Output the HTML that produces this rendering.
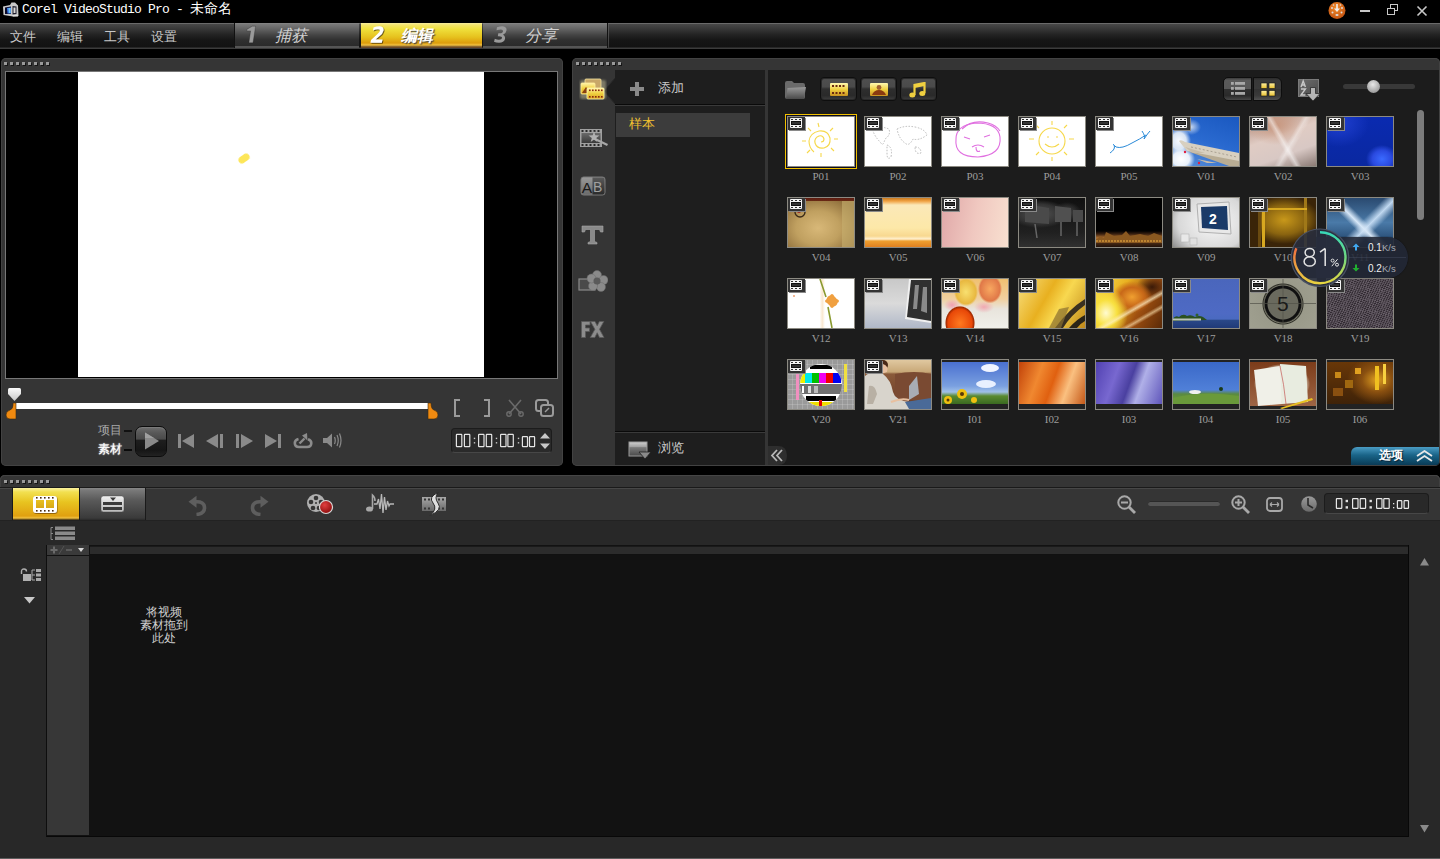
<!DOCTYPE html>
<html><head><meta charset="utf-8">
<style>
*{margin:0;padding:0;box-sizing:border-box}
html,body{width:1440px;height:859px;overflow:hidden;background:#000;font-family:"Liberation Sans",sans-serif}
.a{position:absolute}
/* title */
#title{left:0;top:0;width:1440px;height:23px;background:#000}
#ttxt{left:22px;top:2px;font-family:"Liberation Mono",monospace;font-size:13px;letter-spacing:-0.8px;color:#fff;white-space:nowrap;line-height:14px}
/* menubar */
#menu{left:0;top:23px;width:1440px;height:26px;background:linear-gradient(#6a6a6a 0,#6a6a6a 1px,#484848 1px,#333 7px,#222 12px,#161616 17px,#121212 24px,#3c3c3c 25px,#3c3c3c 26px)}
.mi{top:29px;font-size:13px;color:#c8c8c8;line-height:16px;white-space:nowrap}
.tab{top:23px;height:25px;background:linear-gradient(#8a8a8a 0,#7a7a7a 1px,#5e5e5e 7px,#444 12px,#303030 17px,#2a2a2a 23px,#555 23px,#555 25px)}
.tnum{font-style:italic;font-weight:bold;font-size:23px;line-height:22px;color:#8a8a8a}
.tlab{font-style:italic;font-size:16px;line-height:17px;color:#d0d0d0}
/* panels */
.panel{background:#353535;border-radius:5px;box-shadow:inset 0 0 0 1px #424242}
.dots{height:4px;background:linear-gradient(90deg,#9a9a9a 0 3px,transparent 3px) 0 0/6px 3px repeat-x,linear-gradient(90deg,#161616 0 3px,transparent 3px) 1px 1px/6px 3px repeat-x}
.thumb{width:68px;height:51px;border:1px solid #8c8a82;overflow:hidden}
.lbl{width:68px;text-align:center;font-family:"Liberation Serif",serif;font-size:11px;color:#9c9c9c;line-height:12px;letter-spacing:-0.1px}
.fi{position:absolute;left:0;top:0;width:17px;height:13px;background:#333;box-shadow:1px 1px 0 #8a8a8a}
.fi i{position:absolute;left:2px;top:1px;width:12px;height:10px;border-radius:1px;background:repeating-linear-gradient(90deg,transparent 0 1px,#333 1px 3px,transparent 3px 4px) 0 1px/12px 1px no-repeat,repeating-linear-gradient(90deg,transparent 0 1px,#333 1px 3px,transparent 3px 4px) 0 8px/12px 1px no-repeat,#f4f4f4}
.fi b{position:absolute;left:3px;top:4px;width:10px;height:4px;background:#333;border:1px solid #111}
</style></head><body>
<!-- TITLE BAR -->
<div id="title" class="a"></div>
<div id="ttxt" class="a">Corel VideoStudio Pro - <span style="font-size:14px;letter-spacing:0">未命名</span></div>

<!-- window controls -->
<svg class="a" style="left:2px;top:1px" width="18" height="17" viewBox="0 0 18 17"><path d="M1 5.5 L8 4 L9.5 1.5 L13 1.5 L16 4.5 L16.5 15 L11 15.5 L1.5 14Z" fill="#c8c8c8"/><path d="M3 6.5 L9 5.5 L9 13 L3 13Z" fill="#0a0a2a"/><path d="M5 7 L9 6.5 L9 12.5 L5.5 12.5Z" fill="#3a7ae8"/><path d="M6.5 7 L8.5 7 L8.5 12 L7 12Z" fill="#70c8f0"/><path d="M10.5 5 L14.5 5.5 L14.5 13 L10.5 13.5Z" fill="#202030"/><path d="M11.5 6.5 L13.5 6.5 L13.5 12 L11.5 12Z" fill="#d8d8d8"/><path d="M10 14 L16 14 L16 15.5 L11 15.5Z" fill="#e0e0e0"/></svg>
<svg class="a" style="left:1328px;top:1px" width="18" height="18" viewBox="0 0 18 18">
<defs><radialGradient id="og" cx="0.45" cy="0.35" r="0.7"><stop offset="0" stop-color="#f08a2a"/><stop offset="1" stop-color="#c05010"/></radialGradient></defs>
<circle cx="9" cy="9.5" r="8.5" fill="url(#og)"/>
<rect x="8.2" y="3" width="1.6" height="6" fill="#eee"/><path d="M6 7.5 L9 11 L12 7.5Z" fill="#eee"/>
<circle cx="4" cy="7" r="1" fill="#ddd"/><circle cx="14" cy="7" r="1" fill="#ddd"/><circle cx="4.5" cy="11.5" r="1" fill="#ddd"/><circle cx="13.5" cy="11.5" r="1" fill="#ddd"/><ellipse cx="9" cy="14" rx="1.6" ry="1.1" fill="#ddd"/><circle cx="5.5" cy="4" r="0.8" fill="#ddd"/><circle cx="12.5" cy="4" r="0.8" fill="#ddd"/>
</svg>
<div class="a" style="left:1360px;top:10px;width:10px;height:2px;background:#c8c8c8"></div>
<svg class="a" style="left:1387px;top:4px" width="12" height="12" viewBox="0 0 12 12"><rect x="3.5" y="0.5" width="7" height="6" fill="none" stroke="#c8c8c8"/><rect x="0.5" y="4.5" width="7" height="6" fill="#000" stroke="#c8c8c8"/></svg>
<svg class="a" style="left:1416px;top:5px" width="12" height="12" viewBox="0 0 12 12"><path d="M1.5 1.5 L10.5 10.5 M10.5 1.5 L1.5 10.5" stroke="#c8c8c8" stroke-width="1.6"/></svg>
<!-- MENU BAR -->
<div id="menu" class="a"></div>
<div class="a mi" style="left:10px">文件</div>
<div class="a mi" style="left:57px">编辑</div>
<div class="a mi" style="left:104px">工具</div>
<div class="a mi" style="left:151px">设置</div>
<div class="a" style="left:234px;top:23px;width:1px;height:25px;background:#111"></div>
<div class="a tab" style="left:235px;width:124px"></div>
<svg class="a" style="left:0;top:0" width="520" height="48" viewBox="0 0 520 48"><path d="M255.6 26.2 L252.3 26.2 L246.8 29.4 L246.8 30.9 L250.6 30.9 L248.9 42.8 L253 42.8Z" fill="#9a9a9a" stroke="#1e1e1e" stroke-width="0.3"/></svg>
<div class="a tlab" style="left:275px;top:27px">捕获</div>
<div class="a" style="left:361px;top:23px;width:121px;height:25px;background:linear-gradient(#f6eca0 0,#f3e46a 2px,#efe03c 6px,#e6c21e 14px,#dc9c0c 20px,#f0c040 22px,#6a4a2a 24px)"></div>
<svg class="a" style="left:0;top:0" width="400" height="48" viewBox="0 0 400 48"><defs><filter id="ds"><feDropShadow dx="0.8" dy="0.8" stdDeviation="0.5" flood-color="#3a2a00" flood-opacity="0.9"/></filter></defs><path d="M373.5 27.5 Q377 26 380 26.2 Q384 26.8 383.5 30.5 Q383 33.5 379 36.5 L375.5 39.5 L382.5 39.5 L381.8 42.7 L370.4 42.7 L371 40 L377.5 34 Q380 31.5 380 30.5 Q380 29.3 378 29.3 Q375.5 29.3 373 30.5Z" fill="#fff" filter="url(#ds)"/></svg>
<div class="a tlab" style="left:401px;top:27px;color:#fff;font-weight:bold;text-shadow:1px 1px 1px #444">编辑</div>
<div class="a tab" style="left:483px;width:124px"></div>

<svg class="a" style="left:0;top:0" width="520" height="48" viewBox="0 0 520 48"><path d="M497 27.2 Q501 26 504 26.5 Q507 27.5 506.5 30.5 Q506 33.5 503 34.8 Q505.5 36 505 39 Q504 42.8 499 42.8 Q496 42.8 494 41.8 L494.8 38.8 Q497 39.8 499 39.8 Q501.8 39.8 502 38 Q502.2 36.2 499 36.2 L497.8 36.2 L498.3 33.3 L499.5 33.3 Q503 33.3 503 31 Q503 29.5 501 29.5 Q499 29.5 496.5 30.2Z" fill="#9a9a9a"/></svg>
<div class="a tlab" style="left:525px;top:27px">分享</div>
<div class="a" style="left:607px;top:23px;width:1px;height:25px;background:#111"></div><div class="a" style="left:608px;top:24px;width:1px;height:24px;background:linear-gradient(#5a5a5a,#3a3a3a)"></div>

<!-- PREVIEW PANEL -->
<div class="a panel" style="left:1px;top:58px;width:562px;height:408px"></div>
<div class="a dots" style="left:4px;top:62px;width:46px"></div>
<div class="a" style="left:5px;top:71px;width:553px;height:308px;border:1px solid #777;background:#000"></div>
<div class="a" style="left:78px;top:72px;width:406px;height:305px;background:#fff"></div>

<!-- preview controls -->
<div class="a" style="left:238px;top:155px;width:12px;height:7px;border-radius:4px;background:#fde658;transform:rotate(-35deg);filter:blur(0.4px)"></div>
<div class="a" style="left:14px;top:403px;width:417px;height:6px;background:#fff"></div>
<svg class="a" style="left:5px;top:402px" width="12" height="18" viewBox="0 0 12 18"><path d="M8 1 L11 1 L11 17 L5 17 Q1 17 1 13 Q1 9 5 8 Q8 7 8 3Z" fill="#f08a10" stroke="#3a2a10" stroke-width="0.6"/></svg>
<svg class="a" style="left:427px;top:402px" width="12" height="18" viewBox="0 0 12 18"><path d="M1 1 L4 1 Q4 7 7 8 Q11 9 11 13 Q11 17 7 17 L1 17Z" fill="#f08a10" stroke="#3a2a10" stroke-width="0.6"/></svg>
<svg class="a" style="left:7px;top:387px" width="15" height="15" viewBox="0 0 15 15"><defs><linearGradient id="kg" x1="0" y1="0" x2="0" y2="1"><stop offset="0" stop-color="#fafafa"/><stop offset="1" stop-color="#c8c8c8"/></linearGradient></defs><path d="M2.5 1 L12.5 1 Q14 1 14 2.5 L14 7 L7.5 14 L1 7 L1 2.5 Q1 1 2.5 1Z" fill="url(#kg)"/></svg>
<div class="a" style="left:98px;top:424px;font-size:12px;color:#a8a8a8;line-height:13px">项目</div>
<div class="a" style="left:98px;top:443px;font-size:12px;color:#fff;line-height:13px;text-shadow:0 0 2px #aaa,0 0 1px #fff">素材</div>
<div class="a" style="left:124px;top:430px;width:8px;height:2px;background:#111"></div>
<div class="a" style="left:124px;top:449px;width:8px;height:2px;background:#0a0a0a"></div>
<div class="a" style="left:135px;top:426px;width:32px;height:31px;border-radius:7px;background:linear-gradient(#6e6e6e 0,#585858 20%,#4a4a4a 42%,#1e1e1e 45%,#161616 80%,#222 100%);border:1px solid #0c0c0c;box-shadow:inset 0 1px 0 #7a7a7a"></div>
<svg class="a" style="left:143px;top:431px" width="18" height="20" viewBox="0 0 18 20"><path d="M2 1.5 L16 10 L2 18.5Z" fill="#8a8a8a"/><path d="M2 1.5 L11 7 L2 7Z" fill="#a0a0a0"/></svg>
<svg class="a" style="left:177px;top:433px" width="120" height="16" viewBox="0 0 120 16" fill="#8a8a8a">
<rect x="1" y="1" width="3" height="14"/><path d="M5 8 L17 1 L17 15Z"/>
<path d="M29 8 L41 1 L41 15Z"/><rect x="43" y="1" width="3" height="14"/>
<rect x="59" y="1" width="3" height="14"/><path d="M64 1 L76 8 L64 15Z"/>
<path d="M88 1 L100 8 L88 15Z"/><rect x="101" y="1" width="3" height="14"/>
</svg>
<svg class="a" style="left:293px;top:432px" width="20" height="17" viewBox="0 0 20 17"><path d="M5.5 7 Q1.8 8 1.8 11 Q1.8 15 6 15 L14 15 Q18.3 15 18.3 11 Q18.3 8.2 15 7.2" fill="none" stroke="#8c8c8c" stroke-width="2.6"/><path d="M6.5 11.5 L11.5 6.5" stroke="#8c8c8c" stroke-width="2.4"/><path d="M9 3.5 L14 1 L14.5 8.5Z" fill="#8c8c8c"/></svg>
<svg class="a" style="left:322px;top:432px" width="20" height="17" viewBox="0 0 20 17"><path d="M1 6 L5 6 L10 1.5 L10 15.5 L5 11 L1 11Z" fill="#8a8a8a"/><path d="M12.5 5 Q14 8.5 12.5 12 M15 3 Q17.5 8.5 15 14 M17.5 1.5 Q20.5 8.5 17.5 15.5" fill="none" stroke="#8a8a8a" stroke-width="1.2"/></svg>
<svg class="a" style="left:452px;top:398px" width="110" height="20" viewBox="0 0 110 20" fill="none" stroke="#9a9a9a" stroke-width="2">
<path d="M8 2 L3 2 L3 18 L8 18"/><path d="M32 2 L37 2 L37 18 L32 18"/>
<path d="M57 2 L69 16 M69 2 L57 16" stroke="#6a6a6a" stroke-width="1.6"/><circle cx="57" cy="16" r="2.2" stroke="#6a6a6a" stroke-width="1.4"/><circle cx="69" cy="16" r="2.2" stroke="#6a6a6a" stroke-width="1.4"/>
<rect x="84" y="2" width="12" height="11" rx="2.5"/><rect x="89" y="7" width="12" height="11" rx="2.5" fill="#353535"/><path d="M93 14 L97 10" stroke-width="1.4"/>
</svg>
<div class="a" style="left:451px;top:428px;width:101px;height:25px;border-radius:4px;background:#2a2a2a;border:1px solid #1c1c1c;border-bottom-color:#474747"></div>
<svg class="a" style="left:451px;top:428px" width="101" height="25" viewBox="0 0 101 25"><g fill="none" stroke="#e4e4e4" stroke-width="1.2"><rect x="5.40" y="6.30" width="5.40" height="12.30" rx="0.6"/><rect x="13.40" y="6.30" width="5.40" height="12.30" rx="0.6"/><rect x="27.60" y="6.30" width="5.40" height="12.30" rx="0.6"/><rect x="35.30" y="6.30" width="5.40" height="12.30" rx="0.6"/><rect x="49.60" y="6.30" width="5.40" height="12.30" rx="0.6"/><rect x="56.90" y="6.30" width="5.40" height="12.30" rx="0.6"/><rect x="71.40" y="8.60" width="5.10" height="10.00" rx="0.6"/><rect x="78.50" y="8.60" width="5.10" height="10.00" rx="0.6"/></g><g fill="#c8c8c8"><rect x="22.8" y="9.7" width="1.4" height="1.4"/><rect x="22.8" y="14.1" width="1.4" height="1.4"/><rect x="44.8" y="9.7" width="1.4" height="1.4"/><rect x="44.8" y="14.1" width="1.4" height="1.4"/><rect x="66.8" y="9.7" width="1.4" height="1.4"/><rect x="66.8" y="14.1" width="1.4" height="1.4"/></g></svg>
<svg class="a" style="left:539px;top:432px" width="12" height="18" viewBox="0 0 12 18"><path d="M1 6.5 L6 1 L11 6.5Z M1 11.5 L6 17 L11 11.5Z" fill="#c8c8c8"/></svg>
<!-- LIBRARY PANEL -->
<div class="a panel" style="left:572px;top:58px;width:868px;height:408px"></div>
<div class="a dots" style="left:576px;top:62px;width:46px"></div>
<div class="a" style="left:615px;top:70px;width:150px;height:395px;background:#1e1e1e"></div>
<div class="a" style="left:615px;top:104px;width:150px;height:1px;background:#0a0a0a"></div>
<div class="a" style="left:615px;top:105px;width:150px;height:1px;background:#3a3a3a"></div>
<div class="a" style="left:615px;top:431px;width:150px;height:1px;background:#0a0a0a"></div>
<div class="a" style="left:615px;top:432px;width:150px;height:1px;background:#3a3a3a"></div>
<div class="a" style="left:616px;top:113px;width:134px;height:24px;background:#3c3c3c"></div>
<div class="a" style="left:629px;top:117px;font-size:13px;color:#f0c030;line-height:14px">样本</div>
<svg class="a" style="left:630px;top:82px" width="14" height="14" viewBox="0 0 14 14"><path d="M5 0H9V5H14V9H9V14H5V9H0V5H5Z" fill="#8a8a8a"/></svg>
<div class="a" style="left:658px;top:81px;font-size:13px;color:#c8c8c8;line-height:14px">添加</div>
<svg class="a" style="left:628px;top:441px" width="24" height="19" viewBox="0 0 24 19"><defs><linearGradient id="bw" x1="0" y1="0" x2="0" y2="1"><stop offset="0" stop-color="#d0d0d0"/><stop offset="0.35" stop-color="#a0a0a0"/><stop offset="0.4" stop-color="#7a7a7a"/><stop offset="1" stop-color="#4a4a4a"/></linearGradient></defs><rect x="1" y="1" width="18" height="14" fill="url(#bw)" stroke="#9a9a9a"/><path d="M11 11 L23 11 L17 18Z" fill="#8a8a8a" stroke="#1e1e1e" stroke-width="0.8"/></svg>
<div class="a" style="left:658px;top:441px;font-size:13px;color:#c8c8c8;line-height:14px">浏览</div>
<!-- pointer from sidebar icon -->
<svg class="a" style="left:604px;top:78px" width="12" height="26" viewBox="0 0 12 26"><path d="M11 0 L11 26 L0 13Z" fill="#1e1e1e"/><path d="M11 0 L0 13 L11 26" fill="none" stroke="#2a2a2a" stroke-width="1"/></svg>
<!-- sidebar icons -->
<svg class="a" style="left:579px;top:78px" width="28" height="22" viewBox="0 0 28 22"><defs><linearGradient id="yi" x1="0" y1="0" x2="0" y2="1"><stop offset="0" stop-color="#fff4a8"/><stop offset="0.5" stop-color="#f0d040"/><stop offset="1" stop-color="#d8a020"/></linearGradient><filter id="gl"><feGaussianBlur stdDeviation="1"/></filter></defs>
<rect x="1" y="2" width="26" height="19" rx="2" fill="#fff8c0" opacity="0.35" filter="url(#gl)"/>
<rect x="6" y="1" width="16" height="10" rx="1" fill="#c8a868" stroke="#f0e0a0" stroke-width="0.8"/>
<rect x="2" y="5" width="14" height="11" rx="1" fill="url(#yi)" stroke="#fff0a0" stroke-width="0.8"/><path d="M3 15 L7 9 L12 15Z" fill="#8a4010"/>
<rect x="8" y="10" width="17" height="11" rx="1" fill="url(#yi)" stroke="#fff8b0" stroke-width="0.8"/>
<g fill="#8a2a10"><rect x="10" y="11.5" width="1.6" height="1.6"/><rect x="13" y="11.5" width="1.6" height="1.6"/><rect x="16" y="11.5" width="1.6" height="1.6"/><rect x="19" y="11.5" width="1.6" height="1.6"/><rect x="22" y="11.5" width="1.6" height="1.6"/><rect x="10" y="18" width="1.6" height="1.6"/><rect x="13" y="18" width="1.6" height="1.6"/><rect x="16" y="18" width="1.6" height="1.6"/><rect x="19" y="18" width="1.6" height="1.6"/><rect x="22" y="18" width="1.6" height="1.6"/></g></svg>
<svg class="a" style="left:579px;top:128px" width="30" height="20" viewBox="0 0 30 20"><defs><linearGradient id="fw" x1="0" y1="0" x2="0" y2="1"><stop offset="0" stop-color="#6a6a6a"/><stop offset="1" stop-color="#3a3a3a"/></linearGradient></defs><rect x="1" y="1" width="22" height="18" fill="#a0a0a0"/><rect x="2.5" y="5" width="19" height="10" fill="url(#fw)"/><g fill="#2a2a2a"><rect x="2.5" y="2" width="2" height="2"/><rect x="6.5" y="2" width="2" height="2"/><rect x="10.5" y="2" width="2" height="2"/><rect x="14.5" y="2" width="2" height="2"/><rect x="18.5" y="2" width="2" height="2"/><rect x="2.5" y="16" width="2" height="2"/><rect x="6.5" y="16" width="2" height="2"/><rect x="10.5" y="16" width="2" height="2"/><rect x="14.5" y="16" width="2" height="2"/><rect x="18.5" y="16" width="2" height="2"/></g><path d="M14 10 L28.5 17" stroke="#a8a8a8" stroke-width="2.2"/><path d="M15 3 L16.3 7.2 L20.5 7.5 L17.2 10 L18.3 14 L15 11.6 L11.7 14 L12.8 10 L9.5 7.5 L13.7 7.2Z" fill="#b0b0b0"/></svg>
<svg class="a" style="left:580px;top:176px" width="26" height="20" viewBox="0 0 26 20"><defs><linearGradient id="abl" x1="0" y1="0" x2="0" y2="1"><stop offset="0" stop-color="#9a9a9a"/><stop offset="1" stop-color="#6a6a6a"/></linearGradient><linearGradient id="abr" x1="0" y1="0" x2="0" y2="1"><stop offset="0" stop-color="#5a5a5a"/><stop offset="1" stop-color="#2a2a2a"/></linearGradient></defs><rect x="1" y="1" width="24" height="18" rx="2.5" fill="url(#abl)" stroke="#7a7a7a"/><path d="M12.5 1.5 H22.5 Q24.5 1.5 24.5 3.5 V16.5 Q24.5 18.5 22.5 18.5 H12.5Z" fill="url(#abr)"/><text x="1.8" y="16.5" font-family="Liberation Sans" font-size="15.5" fill="#1a1a1a">A</text><text x="13" y="16" font-family="Liberation Sans" font-size="14" fill="#a0a0a0">B</text></svg>
<svg class="a" style="left:581px;top:225px" width="23" height="20" viewBox="0 0 23 20"><path d="M1 1 H22 V7 H19.5 L18.5 4.5 H13.5 V16.5 L16 17.5 V19 H7 V17.5 L9.5 16.5 V4.5 H4.5 L3.5 7 H1Z" fill="#8a8a8a" stroke="#a8a8a8" stroke-width="0.6"/></svg>
<svg class="a" style="left:578px;top:270px" width="30" height="22" viewBox="0 0 30 22"><rect x="1" y="9" width="16" height="11" fill="#4a4a4a" stroke="#8a8a8a" stroke-width="1.2"/><g fill="#8a8a8a" stroke="#6a6a6a" stroke-width="0.5"><circle cx="19" cy="5" r="4.5"/><circle cx="25.5" cy="10" r="4.5"/><circle cx="23" cy="17" r="4.5"/><circle cx="15" cy="16" r="4.5"/><circle cx="13.5" cy="8.5" r="4.5"/></g><circle cx="19" cy="11" r="3.5" fill="#5a5a5a"/></svg>
<svg class="a" style="left:580px;top:320px" width="25" height="19" viewBox="0 0 25 19"><path d="M1.5 1.5 H10 V5 H5.5 V8 H9.5 V11.5 H5.5 V17.5 H1.5Z" fill="#8c8c8c" stroke="#5a5a5a" stroke-width="0.8"/><path d="M10.5 1.5 H15 L17.2 5.8 L19.4 1.5 H23.8 L19.5 9.3 L24 17.5 H19.5 L17.2 12.8 L14.8 17.5 H10.3 L14.9 9.3Z" fill="#8c8c8c" stroke="#5a5a5a" stroke-width="0.8"/></svg>
<!-- grid area -->
<div class="a" style="left:768px;top:70px;width:671px;height:395px;background:#1c1c1c"></div>
<svg class="a" style="left:768px;top:446px" width="20" height="19" viewBox="0 0 20 19"><path d="M0 0 H10 Q19 0 19 9.5 Q19 19 10 19 H0Z" fill="#2e2e2e"/><path d="M9 4 L4 9.5 L9 15 M14 4 L9 9.5 L14 15" fill="none" stroke="#b8b8b8" stroke-width="1.8"/></svg>
<svg class="a" style="left:784px;top:80px" width="23" height="20" viewBox="0 0 23 20"><defs><linearGradient id="fg" x1="0" y1="0" x2="0" y2="1"><stop offset="0" stop-color="#9a9a9a"/><stop offset="1" stop-color="#4a4a4a"/></linearGradient></defs><path d="M1 3 Q1 1 3 1 L8 1 L10 3 L19 3 Q21 3 21 5 L21 17 Q21 19 19 19 L3 19 Q1 19 1 17Z" fill="#6a6a6a"/><path d="M3.5 8 L22 7 L20 19 L2 19Z" fill="url(#fg)"/></svg>
<div class="a" style="left:820px;top:77px;width:37px;height:24px;border-radius:4px;background:linear-gradient(#3a3a3a 0,#4e4e4e 8%,#4a4a4a 40%,#2e2e2e 50%,#2a2a2a 80%,#3e3e3e 100%);border:1px solid #0e0e0e;box-shadow:inset 0 0 0 1px #2a2a2a"></div>
<div class="a" style="left:860px;top:77px;width:37px;height:24px;border-radius:4px;background:linear-gradient(#3a3a3a 0,#4e4e4e 8%,#4a4a4a 40%,#2e2e2e 50%,#2a2a2a 80%,#3e3e3e 100%);border:1px solid #0e0e0e;box-shadow:inset 0 0 0 1px #2a2a2a"></div>
<div class="a" style="left:900px;top:77px;width:37px;height:24px;border-radius:4px;background:linear-gradient(#3a3a3a 0,#4e4e4e 8%,#4a4a4a 40%,#2e2e2e 50%,#2a2a2a 80%,#3e3e3e 100%);border:1px solid #0e0e0e;box-shadow:inset 0 0 0 1px #2a2a2a"></div>
<svg class="a" style="left:829px;top:81px" width="20" height="16" viewBox="0 0 20 16"><defs><linearGradient id="yb" x1="0" y1="0" x2="0" y2="1"><stop offset="0" stop-color="#fff8b0"/><stop offset="0.5" stop-color="#f0d040"/><stop offset="1" stop-color="#c89020"/></linearGradient></defs><rect x="1" y="2" width="18" height="13" rx="1" fill="url(#yb)"/><g fill="#6a2a10"><rect x="3" y="4" width="2" height="2"/><rect x="6.5" y="4" width="2" height="2"/><rect x="10" y="4" width="2" height="2"/><rect x="13.5" y="4" width="2" height="2"/><rect x="3" y="11" width="2" height="2"/><rect x="6.5" y="11" width="2" height="2"/><rect x="10" y="11" width="2" height="2"/><rect x="13.5" y="11" width="2" height="2"/></g></svg>
<svg class="a" style="left:869px;top:81px" width="20" height="16" viewBox="0 0 20 16"><rect x="1" y="2" width="18" height="13" rx="1" fill="url(#yb)"/><path d="M3 14 Q5 9 10 9 Q15 9 17 14Z" fill="#8a3a10"/><circle cx="10" cy="6.5" r="2.4" fill="#a06030"/></svg>
<svg class="a" style="left:909px;top:82px" width="18" height="16" viewBox="0 0 18 16"><path d="M5.5 13 V3 L15.5 1 V11" fill="none" stroke="#f0d040" stroke-width="2.2"/><path d="M5.5 3 L15.5 1 V4 L5.5 6Z" fill="#f0d040"/><ellipse cx="3.3" cy="13" rx="3" ry="2.5" fill="#f0d040"/><ellipse cx="13.3" cy="11.5" rx="3" ry="2.5" fill="#f0d040"/></svg>
<div class="a" style="left:1223px;top:77px;width:29px;height:24px;border-radius:5px 0 0 5px;background:linear-gradient(#3a3a3a 0,#5a5a5a 10%,#585858 48%,#303030 52%,#2a2a2a 80%,#484848 100%);border:1px solid #0e0e0e"></div>
<div class="a" style="left:1253px;top:77px;width:29px;height:24px;border-radius:0 6px 6px 0;background:linear-gradient(#2a2a2a 0,#383838 10%,#3a3a3a 48%,#333 52%,#3a3a3a 80%,#505050 100%);border:1px solid #0e0e0e"></div>
<svg class="a" style="left:1230px;top:81px" width="16" height="16" viewBox="0 0 16 16" fill="#a8a8a8"><rect x="1" y="1" width="2.8" height="2.8"/><rect x="5" y="1" width="10" height="2.8"/><rect x="1" y="6" width="2.8" height="2.8"/><rect x="5" y="6" width="10" height="2.8"/><rect x="1" y="11" width="2.8" height="2.8"/><rect x="5" y="11" width="10" height="2.8"/></svg>
<svg class="a" style="left:1260px;top:82px" width="16" height="15" viewBox="0 0 16 15"><defs><linearGradient id="gy" x1="0" y1="0" x2="0" y2="1"><stop offset="0" stop-color="#fff0a0"/><stop offset="1" stop-color="#e8c030"/></linearGradient></defs><g fill="url(#gy)" stroke="#141414" stroke-width="0.6"><rect x="1" y="1" width="6" height="5.5"/><rect x="9" y="1" width="6" height="5.5"/><rect x="1" y="8.5" width="6" height="5.5"/><rect x="9" y="8.5" width="6" height="5.5"/></g></svg>
<svg class="a" style="left:1297px;top:78px" width="25" height="24" viewBox="0 0 25 24"><defs><linearGradient id="sb" x1="0" y1="0" x2="1" y2="1"><stop offset="0" stop-color="#6e6e6e"/><stop offset="1" stop-color="#4a4a4a"/></linearGradient></defs><rect x="1.5" y="1.5" width="20" height="17" fill="url(#sb)" stroke="#7a7a7a" stroke-width="1"/><path d="M4 9 L6.2 3 L8.4 9 M4.8 7 H7.6" fill="none" stroke="#c8c8c8" stroke-width="1.4"/><path d="M4 11 H8.4 L4 17 H8.4" fill="none" stroke="#c8c8c8" stroke-width="1.4"/><path d="M13.5 9.5 H18.5 V15.5 H23 L16 23 L9 15.5 H13.5Z" fill="#b4b4b4" stroke="#2a2a2a" stroke-width="0.8"/></svg>
<div class="a" style="left:1343px;top:84px;width:72px;height:5px;border-radius:3px;background:#383838"></div>
<div class="a" style="left:1367px;top:80px;width:13px;height:13px;border-radius:50%;background:radial-gradient(circle at 45% 35%,#e8e8e8,#a0a0a0 70%,#808080)"></div>
<div class="a" style="left:1417px;top:110px;width:7px;height:110px;border-radius:4px;background:#7c7c7c"></div>
<div class="a thumb" style="left:787px;top:116px;background:#fff"><svg class="a" style="left:0;top:0" width="66" height="49" viewBox="0 0 66 49" fill="none" stroke="#f6d84a" stroke-width="1.1"><path d="M33 25 Q36 25 36 22 Q35 18 31 19 Q26 21 27 26 Q29 32 36 31 Q43 29 42 21 Q40 13 31 14 Q22 16 21 24 Q21 31 26 35"/><path d="M30 6 L31 10 M45 11 L42 14 M50 22 L46 22 M46 34 L43 31 M33 40 L33 36 M19 36 L22 33 M14 24 L18 24 M20 11 L23 14"/></svg><div class="fi"><i></i><b></b></div></div>
<div class="a lbl" style="left:787px;top:170px">P01</div>
<div class="a thumb" style="left:864px;top:116px;background:#fff"><svg class="a" style="left:0;top:0" width="66" height="49" viewBox="0 0 66 49" fill="none" stroke="#aaa" stroke-width="0.8" stroke-dasharray="1.5 1.5"><path d="M8 14 Q14 8 24 12 Q26 18 20 22 Q18 30 16 26 Q10 20 8 14Z"/><path d="M22 28 Q28 30 26 40 Q22 44 22 36Z"/><path d="M32 12 Q40 8 50 10 Q60 12 62 18 Q54 24 48 22 Q44 30 40 26 Q34 22 32 12Z"/><path d="M50 30 Q56 30 56 36 Q50 38 50 30Z"/></svg><div class="fi"><i></i><b></b></div></div>
<div class="a lbl" style="left:864px;top:170px">P02</div>
<div class="a thumb" style="left:941px;top:116px;background:#fff"><svg class="a" style="left:0;top:0" width="66" height="49" viewBox="0 0 66 49" fill="none" stroke="#e070e0" stroke-width="1.1"><path d="M14 22 Q14 8 34 6 Q56 6 58 20 Q60 38 36 40 Q12 40 14 22Z"/><path d="M20 12 Q30 2 46 6 Q54 8 58 14"/><path d="M22 20 L28 22 M42 20 L48 18 M30 30 Q36 26 42 30 M34 30 Q34 36 38 34"/></svg><div class="fi"><i></i><b></b></div></div>
<div class="a lbl" style="left:941px;top:170px">P03</div>
<div class="a thumb" style="left:1018px;top:116px;background:#fff"><svg class="a" style="left:0;top:0" width="66" height="49" viewBox="0 0 66 49" fill="none" stroke="#f6d84a" stroke-width="1.1"><circle cx="33" cy="24" r="13"/><path d="M26 27 Q33 33 40 27 M28 20 L30 20 M37 20 L39 20 M33 4 L33 8 M48 8 L45 11 M55 22 L50 22 M48 38 L45 35 M33 44 L33 40 M17 38 L20 35 M10 22 L15 22 M17 8 L20 11"/></svg><div class="fi"><i></i><b></b></div></div>
<div class="a lbl" style="left:1018px;top:170px">P04</div>
<div class="a thumb" style="left:1095px;top:116px;background:#fff"><svg class="a" style="left:0;top:0" width="66" height="49" viewBox="0 0 66 49" fill="none" stroke="#2a8ad8" stroke-width="1"><path d="M14 36 Q20 32 18 28 Q16 26 20 30 Q26 32 36 26 Q44 22 50 18 M46 14 Q50 20 48 22 Q52 16 54 14"/></svg><div class="fi"><i></i><b></b></div></div>
<div class="a lbl" style="left:1095px;top:170px">P05</div>
<div class="a thumb" style="left:1172px;top:116px;background:radial-gradient(ellipse 14px 12px at 8px 42px,#fff 0,#e8f0fa 60%,transparent 100%),radial-gradient(ellipse 12px 14px at 6px 24px,#f8faff 0,#d8e4f4 60%,transparent 100%),radial-gradient(ellipse 10px 8px at 18px 10px,#c8d8f0 0,transparent 100%),linear-gradient(200deg,#1a58c0 0,#2a6ad0 50%,#5a90d8 100%)"><svg class="a" style="left:0;top:0" width="66" height="49" viewBox="0 0 66 49"><path d="M6 24 Q8 22 12 25 L66 36 L66 49 L60 49 Q40 40 14 34 Z" fill="#d8d0c0"/><path d="M14 34 L66 44 L66 49 L56 49Z" fill="#b8ac94"/><path d="M12 30 L20 36 L32 36Z M24 42 L34 46 L44 46Z" fill="#c8bca8"/><path d="M18 30 L64 40" stroke="#8a8070" stroke-width="0.6" stroke-dasharray="2 2"/><circle cx="12" cy="35" r="1.2" fill="#e02040"/><circle cx="26" cy="46" r="1.2" fill="#e02040"/></svg><div class="fi"><i></i><b></b></div></div>
<div class="a lbl" style="left:1172px;top:170px">V01</div>
<div class="a thumb" style="left:1249px;top:116px;background:linear-gradient(60deg,transparent 0,transparent 45%,rgba(255,255,255,0.5) 50%,transparent 55%),linear-gradient(120deg,transparent 0,transparent 55%,rgba(255,255,255,0.4) 60%,transparent 66%),radial-gradient(ellipse 30px 20px at 26px 8px,#c89880 0,transparent 100%),linear-gradient(160deg,#b08878 0,#e0ccc4 40%,#d8c8c4 70%,#8a7a74 100%)"><div class="fi"><i></i><b></b></div></div>
<div class="a lbl" style="left:1249px;top:170px">V02</div>
<div class="a thumb" style="left:1326px;top:116px;background:radial-gradient(ellipse 16px 14px at 55px 42px,#3a6aff 0,#2a4ae0 60%,transparent 100%),radial-gradient(ellipse 30px 24px at 12px 6px,#2040d0 0,transparent 100%),linear-gradient(#0a2ab0,#0a28a0)"><div class="fi"><i></i><b></b></div></div>
<div class="a lbl" style="left:1326px;top:170px">V03</div>
<div class="a thumb" style="left:787px;top:197px;background:linear-gradient(#5a1a10 0,#6a2a14 3px,transparent 3px),radial-gradient(ellipse 44px 34px at 30px 30px,#d8b878 0,#c0a060 50%,#8a6a38 100%)"><svg class="a" style="left:0;top:0" width="66" height="49" viewBox="0 0 66 49"><rect x="54" y="3" width="12" height="46" fill="#c8b070" opacity="0.6"/><circle cx="12" cy="14" r="5" fill="none" stroke="#3a2a18" stroke-width="1.4"/><circle cx="11" cy="13" r="2" fill="#a02020"/></svg><div class="fi"><i></i><b></b></div></div>
<div class="a lbl" style="left:787px;top:251px">V04</div>
<div class="a thumb" style="left:864px;top:197px;background:linear-gradient(#c87a20 0,#f0a040 3px,#fbe8b8 7px,#fde8a8 30px,#f8d890 38px,#fff0d0 41px,#f0a030 43px,#e08020 49px)"><div class="fi"><i></i><b></b></div></div>
<div class="a lbl" style="left:864px;top:251px">V05</div>
<div class="a thumb" style="left:941px;top:197px;background:linear-gradient(100deg,#e0a8a8 0,#f0c8c0 50%,#f8e0d0 100%)"><div class="fi"><i></i><b></b></div></div>
<div class="a lbl" style="left:941px;top:251px">V06</div>
<div class="a thumb" style="left:1018px;top:197px;background:radial-gradient(ellipse 30px 14px at 20px 16px,#555 0,#333 70%,transparent 100%),radial-gradient(ellipse 14px 10px at 48px 14px,#4a4a4a 0,transparent 100%),linear-gradient(#101010,#202020 70%,#303030)"><svg class="a" style="left:0;top:0" width="66" height="49" viewBox="0 0 66 49"><path d="M6 6 L30 10 L30 26 L6 24Z" fill="#4a4a4a"/><path d="M36 8 L52 10 L52 24 L36 24Z" fill="#505050"/><path d="M54 12 L64 12 L64 24 L54 24Z" fill="#4a4a4a"/><path d="M16 26 L18 40 M42 24 L42 38 M58 24 L58 38" stroke="#666" stroke-width="1.5"/></svg><div class="fi"><i></i><b></b></div></div>
<div class="a lbl" style="left:1018px;top:251px">V07</div>
<div class="a thumb" style="left:1095px;top:197px;background:linear-gradient(#000 0,#000 33px,#3a2010 36px,#b07030 40px,#503018 44px,#201008 49px)"><svg class="a" style="left:0;top:0" width="66" height="49" viewBox="0 0 66 49"><path d="M0 42 L4 38 L8 40 L10 34 L14 36 L18 38 L26 37 L30 33 L34 38 L44 36 L52 38 L58 35 L66 38 L66 45 L0 45Z" fill="#8a5820"/><path d="M0 43 H66" stroke="#f0b040" stroke-width="1" stroke-dasharray="2 1"/></svg><div class="fi"><i></i><b></b></div></div>
<div class="a lbl" style="left:1095px;top:251px">V08</div>
<div class="a thumb" style="left:1172px;top:197px;background:radial-gradient(ellipse 50px 40px at 40px 24px,#fafafa 0,#d8d8d8 70%,#909090 100%)"><svg class="a" style="left:0;top:0" width="66" height="49" viewBox="0 0 66 49"><path d="M24 6 L56 4 L58 36 L26 34Z" fill="#e8e8e8" stroke="#b0b0b0"/><path d="M28 9 L54 8 L55 32 L29 30Z" fill="#1a3a68"/><text x="36" y="26" font-family="Liberation Sans" font-weight="bold" font-size="14" fill="#fff">2</text><rect x="8" y="36" width="8" height="8" fill="#e8e8e8" stroke="#aaa" stroke-width="0.5"/><rect x="17" y="40" width="7" height="7" fill="#e0e0e0" stroke="#aaa" stroke-width="0.5"/></svg><div class="fi"><i></i><b></b></div></div>
<div class="a lbl" style="left:1172px;top:251px">V09</div>
<div class="a thumb" style="left:1249px;top:197px;background:linear-gradient(90deg,#3a2408 0,#3a2408 8px,#6a4a10 8px,#6a4a10 11px,transparent 11px),radial-gradient(ellipse 36px 24px at 34px 22px,#c8981a 0,#8a6410 60%,#3a2408 100%)"><svg class="a" style="left:0;top:0" width="66" height="49" viewBox="0 0 66 49"><rect x="12" y="0" width="3" height="49" fill="#d8a820"/><rect x="54" y="0" width="3" height="49" fill="#a07818"/><rect x="12" y="10" width="45" height="2" fill="#d8a820"/></svg><div class="fi"><i></i><b></b></div></div>
<div class="a lbl" style="left:1249px;top:251px">V10</div>
<div class="a thumb" style="left:1326px;top:197px;background:linear-gradient(45deg,transparent 0,transparent 40%,#d8e8f8 48%,transparent 56%),linear-gradient(-45deg,transparent 0,transparent 30%,#c0d8f0 40%,transparent 50%),linear-gradient(#2a4a70,#4a7aa8 50%,#1a3a60)"><div class="fi"><i></i><b></b></div></div>
<div class="a lbl" style="left:1326px;top:251px">V11</div>
<div class="a thumb" style="left:787px;top:278px;background:linear-gradient(90deg,#fff 0,#fff 48%,#fae8d0 52%,#fff 56%)"><svg class="a" style="left:0;top:0" width="66" height="49" viewBox="0 0 66 49"><path d="M32 0 L38 18 M40 28 L44 49" stroke="#8a9a30" stroke-width="1.6"/><g fill="#f0a040"><ellipse cx="44" cy="22" rx="7" ry="3"/><ellipse cx="44" cy="22" rx="3" ry="7"/><ellipse cx="44" cy="22" rx="6" ry="5" transform="rotate(45 44 22)"/></g><circle cx="6" cy="17" r="1" fill="#f0a070"/></svg><div class="fi"><i></i><b></b></div></div>
<div class="a lbl" style="left:787px;top:332px">V12</div>
<div class="a thumb" style="left:864px;top:278px;background:linear-gradient(#c8c8c8,#dadada 50%,#b0b8c8)"><svg class="a" style="left:0;top:0" width="66" height="49" viewBox="0 0 66 49"><path d="M44 0 L66 0 L66 44 L40 40Z" fill="#f0f0f0"/><path d="M46 1 L66 1 L66 42 L42 38Z" fill="#303030"/><path d="M50 6 L54 6 L52 30 L48 30Z M58 8 L62 8 L62 34 L56 32Z" fill="#8a8a8a"/></svg><div class="fi"><i></i><b></b></div></div>
<div class="a lbl" style="left:864px;top:332px">V13</div>
<div class="a thumb" style="left:941px;top:278px;background:radial-gradient(ellipse 14px 16px at 18px 44px,#ff7a20 0,#e84808 12px,#a02a00 14px,transparent 15px),radial-gradient(ellipse 11px 13px at 24px 13px,#f8e070 0,#e8b840 10px,transparent 12px),radial-gradient(ellipse 10px 12px at 48px 10px,#f8a860 0,#e07848 10px,transparent 12px),radial-gradient(ellipse 8px 6px at 10px 26px,#f0a0b0 0,transparent 100%),radial-gradient(ellipse 10px 6px at 42px 28px,#f0a8b0 0,transparent 100%),linear-gradient(#f0c070 0,#f0d0a0 20px,#e8e4dc 30px,#f0f0ea 49px)"><div class="fi"><i></i><b></b></div></div>
<div class="a lbl" style="left:941px;top:332px">V14</div>
<div class="a thumb" style="left:1018px;top:278px;background:linear-gradient(120deg,#f8e080 0,#e8b020 40%,#f8d850 60%,#c08818 100%)"><svg class="a" style="left:0;top:0" width="66" height="49" viewBox="0 0 66 49"><path d="M36 49 Q50 30 66 20 L66 26 Q52 36 44 49Z" fill="#3a3020"/><path d="M50 49 Q58 40 66 36 L66 42 Q62 44 58 49Z" fill="#2a2418"/><path d="M30 49 L40 30 L50 28 L42 49Z" fill="#8a7030" opacity="0.7"/></svg><div class="fi"><i></i><b></b></div></div>
<div class="a lbl" style="left:1018px;top:332px">V15</div>
<div class="a thumb" style="left:1095px;top:278px;background:linear-gradient(150deg,transparent 0,transparent 55%,rgba(255,240,200,0.7) 60%,transparent 64%),linear-gradient(150deg,transparent 0,transparent 72%,rgba(255,230,180,0.6) 76%,transparent 80%),radial-gradient(ellipse 22px 26px at 10px 34px,#fffbd0 0,#f8e040 50%,transparent 100%),radial-gradient(ellipse 20px 16px at 36px 18px,#f0a030 0,#c86818 60%,transparent 100%),radial-gradient(ellipse 16px 12px at 56px 8px,#3a1a08 0,transparent 100%),linear-gradient(120deg,#f8e050 0,#e8b020 35%,#a05010 65%,#5a2a08 100%)"><div class="fi"><i></i><b></b></div></div>
<div class="a lbl" style="left:1095px;top:332px">V16</div>
<div class="a thumb" style="left:1172px;top:278px;background:linear-gradient(#4a66bc 0,#4e6ac4 70%,#4a6ac0 82%,#2a4888 84%,#203a78 100%)"><svg class="a" style="left:0;top:0" width="66" height="49" viewBox="0 0 66 49"><path d="M0 40 Q2 36 6 38 Q10 34 14 37 Q18 35 22 38 Q26 36 30 38 L34 41 L0 42Z" fill="#2a5020"/><rect x="0" y="39.5" width="28" height="2" fill="#e0e0e0" opacity="0.8"/><circle cx="24" cy="36" r="1.5" fill="#306030"/></svg><div class="fi"><i></i><b></b></div></div>
<div class="a lbl" style="left:1172px;top:332px">V17</div>
<div class="a thumb" style="left:1249px;top:278px;background:radial-gradient(circle at 33px 25px,#6a6a5e 0,#6a6a5e 15px,#101010 16px,#101010 18px,#8a8a7a 19px,#303028 20px,#9a9a8a 21px,#a0a090 100%)"><svg class="a" style="left:0;top:0" width="66" height="49" viewBox="0 0 66 49"><path d="M0 24.5 H66 M33 0 V49" stroke="#505048" stroke-width="0.7"/><circle cx="33" cy="24.5" r="19" fill="none" stroke="#404038" stroke-width="0.6"/><text x="27" y="32" font-family="Liberation Sans" font-size="21" fill="#1a1a1a">5</text></svg><div class="fi"><i></i><b></b></div></div>
<div class="a lbl" style="left:1249px;top:332px">V18</div>
<div class="a thumb" style="left:1326px;top:278px;background:repeating-linear-gradient(73deg,rgba(140,130,140,0.35) 0 0.7px,transparent 0.7px 1.6px),repeating-linear-gradient(-17deg,rgba(20,14,20,0.45) 0 0.8px,transparent 0.8px 1.9px),repeating-linear-gradient(31deg,rgba(120,110,125,0.3) 0 0.6px,transparent 0.6px 2.3px),#4a424a"><div class="fi"><i></i><b></b></div></div>
<div class="a lbl" style="left:1326px;top:332px">V19</div>
<div class="a thumb" style="left:787px;top:359px;background:#9a9a9a"><svg class="a" style="left:0;top:0" width="66" height="49" viewBox="0 0 66 49"><defs><pattern id="gp" width="5" height="5" patternUnits="userSpaceOnUse"><path d="M5 0 V5 H0" fill="none" stroke="#d0d0d0" stroke-width="0.6"/></pattern></defs><rect width="66" height="49" fill="url(#gp)"/><rect x="8" y="12" width="3" height="28" fill="#f090c0"/><rect x="56" y="4" width="3" height="28" fill="#f0e040"/><circle cx="33" cy="25" r="21" fill="#fff"/><clipPath id="cc"><circle cx="33" cy="25" r="21"/></clipPath><g clip-path="url(#cc)"><rect x="10" y="13" width="7" height="10" fill="#f0f000"/><rect x="17" y="13" width="7" height="10" fill="#00e8e8"/><rect x="24" y="13" width="7" height="10" fill="#00c000"/><rect x="31" y="13" width="7" height="10" fill="#f000f0"/><rect x="38" y="13" width="7" height="10" fill="#f00000"/><rect x="45" y="13" width="8" height="10" fill="#0000f0"/><rect x="10" y="24" width="46" height="10" fill="#707070"/><rect x="14" y="26" width="2" height="7" fill="#fff"/><rect x="20" y="26" width="3" height="7" fill="#ddd"/><rect x="26" y="26" width="4" height="7" fill="#bbb"/><rect x="18" y="36" width="30" height="5" fill="#000"/><rect x="10" y="42" width="46" height="8" fill="#f0e000"/><rect x="31" y="40" width="3" height="8" fill="#e00000"/><rect x="22" y="5" width="22" height="4" fill="#000"/></g></svg><div class="fi"><i></i><b></b></div></div>
<div class="a lbl" style="left:787px;top:413px">V20</div>
<div class="a thumb" style="left:864px;top:359px;background:linear-gradient(#e0c8a0 0,#c8a878 12px,#8a5a3a 14px,#7a4a30 30px,#6a3a22 49px)"><svg class="a" style="left:0;top:0" width="66" height="49" viewBox="0 0 66 49"><path d="M30 14 Q50 10 66 14 L66 40 L30 40Z" fill="#7a4a32"/><path d="M0 16 Q6 10 18 14 Q26 20 28 32 Q30 40 44 42 L44 49 L0 49Z" fill="#d8d4cc"/><path d="M4 26 Q10 24 12 34 L8 44 L2 44Z" fill="#b8b0a4"/><circle cx="18" cy="5" r="5" fill="#4a2a18"/><path d="M18 4 Q24 6 22 12 L16 14Z" fill="#e8c0a0"/><path d="M40 42 L66 38 L66 49 L44 49Z" fill="#4a6a98"/><path d="M44 26 L52 16 L54 34 L44 40Z" fill="#a8acb4"/><path d="M26 42 Q36 38 44 40" stroke="#e8c0a0" stroke-width="2" fill="none"/></svg><div class="fi"><i></i><b></b></div></div>
<div class="a lbl" style="left:864px;top:413px">V21</div>
<div class="a thumb" style="left:941px;top:359px;background:linear-gradient(#222 0,#222 2px,#4a70d0 2px,#7aa0e0 26px,#a0c0e8 32px,#5a8a30 36px,#3a6a20 44px,#222 44px)"><svg class="a" style="left:0;top:0" width="66" height="49" viewBox="0 0 66 49"><ellipse cx="48" cy="8" rx="9" ry="4" fill="#f0f4ff"/><ellipse cx="44" cy="24" rx="10" ry="4" fill="#e8f0ff"/><g fill="#f0c010"><circle cx="20" cy="34" r="5"/><circle cx="6" cy="40" r="4"/><circle cx="32" cy="40" r="3"/></g><g fill="#5a3808"><circle cx="20" cy="34" r="2"/><circle cx="6" cy="40" r="1.5"/></g></svg></div>
<div class="a lbl" style="left:941px;top:413px">I01</div>
<div class="a thumb" style="left:1018px;top:359px;background:linear-gradient(#222 0,#222 2px,transparent 2px,transparent 44px,#222 44px),linear-gradient(110deg,#c04008 0,#f08830 30%,#e06010 50%,#fac080 70%,#c05010 100%)"></div>
<div class="a lbl" style="left:1018px;top:413px">I02</div>
<div class="a thumb" style="left:1095px;top:359px;background:linear-gradient(#222 0,#222 2px,transparent 2px,transparent 44px,#222 44px),linear-gradient(110deg,#5040b0 0,#7868d0 30%,#4a40a0 50%,#b0b0e8 65%,#5a50b8 100%)"></div>
<div class="a lbl" style="left:1095px;top:413px">I03</div>
<div class="a thumb" style="left:1172px;top:359px;background:linear-gradient(#222 0,#222 2px,#3a68c8 2px,#5080d8 30px,#5a8a40 34px,#70a040 44px,#222 44px)"><svg class="a" style="left:0;top:0" width="66" height="49" viewBox="0 0 66 49"><path d="M0 38 Q30 30 66 36 L66 44 L0 44Z" fill="#6a9a3a"/><ellipse cx="22" cy="32" rx="6" ry="2" fill="#f0f0f0"/><circle cx="48" cy="29" r="2" fill="#1a3a18"/></svg></div>
<div class="a lbl" style="left:1172px;top:413px">I04</div>
<div class="a thumb" style="left:1249px;top:359px;background:linear-gradient(#222 0,#222 2px,transparent 2px,transparent 46px,#222 46px),radial-gradient(ellipse 28px 20px at 32px 24px,#f0f0e8 0,#e8e8d8 80%,transparent 100%),linear-gradient(#7a3a18,#a06848)"><svg class="a" style="left:0;top:0" width="66" height="49" viewBox="0 0 66 49"><path d="M4 10 L30 6 L32 44 L8 46Z" fill="#f0f0e8"/><path d="M30 4 L56 6 L58 42 L32 44Z" fill="#e8ece0"/><path d="M30 48 L62 38 L63 40 L32 49Z" fill="#e8c020"/><path d="M30 6 Q34 24 36 44" stroke="#c04040" stroke-width="0.6" fill="none"/></svg></div>
<div class="a lbl" style="left:1249px;top:413px">I05</div>
<div class="a thumb" style="left:1326px;top:359px;background:linear-gradient(#222 0,#222 2px,transparent 2px,transparent 44px,#222 44px),radial-gradient(ellipse 30px 24px at 50px 20px,#e0a020 0,#8a5010 50%,transparent 100%),linear-gradient(#6a3808,#3a2008)"><svg class="a" style="left:0;top:0" width="66" height="49" viewBox="0 0 66 49" fill="#c88818"><rect x="8" y="12" width="6" height="6"/><rect x="18" y="20" width="8" height="8" fill="#a06810"/><rect x="28" y="8" width="6" height="6" fill="#e0a020"/><rect x="48" y="6" width="4" height="24" fill="#f0c020"/><rect x="56" y="4" width="3" height="20" fill="#f8d040"/><rect x="6" y="28" width="10" height="8" fill="#8a5010"/></svg></div>
<div class="a lbl" style="left:1326px;top:413px">I06</div>
<div class="a" style="left:785px;top:114px;width:72px;height:55px;border:1px solid #f0c000;box-shadow:inset 0 0 0 1px #0a0a20"></div>

<!-- options button -->
<div class="a" style="left:1351px;top:447px;width:88px;height:18px;border-radius:6px 0 3px 0;background:linear-gradient(#4a9cc4,#1a6488 45%,#0e4a68 80%,#0a3a56)"></div>
<div class="a" style="left:1379px;top:448px;font-size:12px;line-height:14px;color:#fff;font-weight:bold;text-shadow:1px 1px 1px #0a2030">选项</div>
<svg class="a" style="left:1416px;top:450px" width="17" height="12" viewBox="0 0 17 12"><path d="M1 6 L8.5 1 L16 6 M1 11 L8.5 6 L16 11" fill="none" stroke="#e8e8e8" stroke-width="1.8"/></svg>
<!-- network overlay -->
<div class="a" style="left:1316px;top:237px;width:92px;height:41px;border-radius:0 21px 21px 0;background:rgba(34,40,54,0.9);box-shadow:0 0 1px #000"></div>
<div class="a" style="left:1320px;top:257px;width:86px;height:1px;background:rgba(80,90,110,0.35)"></div>
<svg class="a" style="left:1290px;top:228px" width="60" height="60" viewBox="0 0 60 60"><defs><linearGradient id="rg1" x1="0" y1="0" x2="0" y2="1"><stop offset="0" stop-color="#38d8b8"/><stop offset="0.5" stop-color="#70d880"/><stop offset="1" stop-color="#e8d840"/></linearGradient><linearGradient id="rg2" x1="0" y1="1" x2="0" y2="0"><stop offset="0" stop-color="#e8d040"/><stop offset="1" stop-color="#f07040"/></linearGradient></defs>
<circle cx="30" cy="29.7" r="28.7" fill="rgba(40,46,62,0.88)" stroke="#4a5264" stroke-width="1.2"/>
<path d="M30 4.2 A25.5 25.5 0 0 1 30 55.2" fill="none" stroke="url(#rg1)" stroke-width="2.4"/>
<path d="M30 55.2 A25.5 25.5 0 0 1 6.3 20.3" fill="none" stroke="url(#rg2)" stroke-width="2.4"/>
</svg>
<svg class="a" style="left:1300px;top:245px" width="42" height="24" viewBox="0 0 42 24" fill="none" stroke="#e4e4e4" stroke-width="1.5"><ellipse cx="9.7" cy="7.6" rx="4.6" ry="4.2"/><ellipse cx="9.7" cy="16.4" rx="5.6" ry="4.7"/><path d="M25.2 3.4 V21 M25.2 3.4 L20 7.2"/><g stroke-width="1"><circle cx="32.6" cy="15.6" r="1.5"/><circle cx="37" cy="19.7" r="1.5"/><path d="M37.6 14.2 L31.8 21.2"/></g></svg>

<svg class="a" style="left:1352px;top:243px" width="8" height="8" viewBox="0 0 8 8"><path d="M4 0.5 L7.5 4 L5 4 L5 7.5 L3 7.5 L3 4 L0.5 4Z" fill="#40a8f0"/></svg>
<svg class="a" style="left:1352px;top:264px" width="8" height="8" viewBox="0 0 8 8"><path d="M4 7.5 L7.5 4 L5 4 L5 0.5 L3 0.5 L3 4 L0.5 4Z" fill="#20b030"/></svg>
<div class="a" style="left:1368px;top:242px;font-size:10px;line-height:11px;color:#f0f0f0;white-space:nowrap">0.1<span style="color:#a8acb4;font-size:9.5px">K/s</span></div>
<div class="a" style="left:1368px;top:263px;font-size:10px;line-height:11px;color:#f0f0f0;white-space:nowrap">0.2<span style="color:#a8acb4;font-size:9.5px">K/s</span></div>
<!-- TIMELINE PANEL -->
<div class="a" style="left:0px;top:475px;width:1440px;height:384px;background:#282828;border-radius:5px 5px 0 0"></div>
<div class="a" style="left:0px;top:475px;width:1440px;height:13px;background:#353535;border-radius:5px 5px 0 0;border-bottom:1px solid #1a1a1a;box-shadow:inset 0 1px 0 #454545,inset 1px 0 0 #404040,inset -1px 0 0 #404040"></div>
<div class="a" style="left:0px;top:488px;width:1440px;height:33px;background:#353535;border-bottom:1px solid #222;box-shadow:inset 0 1px 0 #474747"></div>
<div class="a dots" style="left:4px;top:480px;width:46px"></div>
<div class="a" style="left:12px;top:488px;width:67px;height:32px;background:linear-gradient(#fbf2a0 0,#f2e050 4px,#e8c420 14px,#e0a010 28px,#f0c040 30px,#3a2a10 32px);border-left:1px solid #1a1a1a"></div>
<div class="a" style="left:79px;top:488px;width:67px;height:32px;background:linear-gradient(#888 0,#7a7a7a 2px,#5a5a5a 12px,#3a3a3a 30px,#2a2a2a 32px);border-left:1px solid #1a1a1a;border-right:1px solid #1a1a1a"></div>
<svg class="a" style="left:32px;top:495px" width="26" height="19" viewBox="0 0 26 19"><defs><filter id="sh"><feDropShadow dx="0.5" dy="0.8" stdDeviation="0.6" flood-color="#6a4000" flood-opacity="0.8"/></filter><linearGradient id="wy" x1="0" y1="0" x2="0" y2="1"><stop offset="0" stop-color="#e8c020"/><stop offset="1" stop-color="#d8a818"/></linearGradient></defs><rect x="1" y="1" width="24" height="17" rx="3" fill="#fff" filter="url(#sh)"/><rect x="4" y="5" width="8" height="8" fill="url(#wy)"/><rect x="14" y="5" width="8" height="8" fill="url(#wy)"/><g fill="#4a2a10"><rect x="4" y="2" width="1.6" height="1.6"/><rect x="8" y="2" width="1.6" height="1.6"/><rect x="12" y="2" width="1.6" height="1.6"/><rect x="16" y="2" width="1.6" height="1.6"/><rect x="20" y="2" width="1.6" height="1.6"/><rect x="4" y="15" width="1.6" height="1.6"/><rect x="8" y="15" width="1.6" height="1.6"/><rect x="12" y="15" width="1.6" height="1.6"/><rect x="16" y="15" width="1.6" height="1.6"/><rect x="20" y="15" width="1.6" height="1.6"/></g></svg>
<svg class="a" style="left:100px;top:495px" width="25" height="18" viewBox="0 0 25 18"><defs><linearGradient id="sg" x1="0" y1="0" x2="0" y2="1"><stop offset="0" stop-color="#f0f0f0"/><stop offset="1" stop-color="#b8b8b8"/></linearGradient></defs><rect x="1" y="1" width="23" height="16" rx="2.5" fill="url(#sg)" stroke="#444" stroke-width="0.4"/><rect x="3" y="7" width="19" height="3" fill="#3a3a3a"/><rect x="3" y="12" width="19" height="3" fill="#3a3a3a"/><path d="M10 2.5 L16 2.5 L13 6Z" fill="#3a3a3a"/></svg>
<svg class="a" style="left:187px;top:495px" width="22" height="21" viewBox="0 0 22 21"><path d="M8 6.8 Q17.5 6 17.5 12.8 Q17.5 18.8 9.5 19.5" stroke="#5e5e5e" stroke-width="3.6" fill="none"/><path d="M1.5 6.8 L9.5 0.8 L9.5 12.8Z" fill="#5e5e5e"/></svg>
<svg class="a" style="left:248px;top:495px" width="22" height="21" viewBox="0 0 22 21"><path d="M14 6.8 Q4.5 6 4.5 12.8 Q4.5 18.8 12.5 19.5" stroke="#5e5e5e" stroke-width="3.6" fill="none"/><path d="M20.5 6.8 L12.5 0.8 L12.5 12.8Z" fill="#5e5e5e"/></svg>
<svg class="a" style="left:306px;top:493px" width="28" height="22" viewBox="0 0 28 22"><defs><radialGradient id="rd" cx="0.4" cy="0.35" r="0.7"><stop offset="0" stop-color="#e04040"/><stop offset="1" stop-color="#8a0a0a"/></radialGradient></defs><circle cx="10" cy="10" r="9" fill="#b0b0b0"/><g fill="#353535"><circle cx="10" cy="5" r="2.3"/><circle cx="5" cy="9" r="2.3"/><circle cx="7" cy="15" r="2.3"/><circle cx="13" cy="15" r="2.3"/><circle cx="15" cy="9" r="2.3"/></g><circle cx="10" cy="10" r="1" fill="#353535"/><circle cx="20" cy="14" r="6.5" fill="url(#rd)" stroke="#d8d8d8" stroke-width="1.2"/></svg>
<svg class="a" style="left:365px;top:491px" width="30" height="26" viewBox="0 0 30 26"><ellipse cx="4.5" cy="18" rx="3.5" ry="2.6" fill="#a8a8a8"/><path d="M7.5 18 L7.5 4 Q10 6 10 10" fill="none" stroke="#a8a8a8" stroke-width="1.6"/><path d="M9 13 L12 13 L13.5 8 L15 18 L16.5 3 L18 22 L19.5 6 L21 19 L22.5 10 L24 15 L25 13 L29 13" fill="none" stroke="#b8b8b8" stroke-width="1.3"/></svg>
<svg class="a" style="left:421px;top:492px" width="26" height="24" viewBox="0 0 26 24"><defs><linearGradient id="tg" x1="0" y1="0" x2="0" y2="1"><stop offset="0" stop-color="#a8a8a8"/><stop offset="1" stop-color="#6a6a6a"/></linearGradient></defs><rect x="1" y="5" width="24" height="14" fill="url(#tg)"/><g fill="#353535"><rect x="3" y="6.5" width="2" height="2"/><rect x="7" y="6.5" width="2" height="2"/><rect x="17" y="6.5" width="2" height="2"/><rect x="21" y="6.5" width="2" height="2"/><rect x="3" y="15.5" width="2" height="2"/><rect x="7" y="15.5" width="2" height="2"/><rect x="17" y="15.5" width="2" height="2"/><rect x="21" y="15.5" width="2" height="2"/></g><path d="M17 0.5 Q7 5 12 11 Q17 17 9 23.5 Q22 18 17 11 Q13 6 17 0.5Z" fill="#e0e0e0" stroke="#2a2a2a" stroke-width="1"/></svg>
<!-- right toolbar -->
<svg class="a" style="left:1117px;top:495px" width="20" height="19" viewBox="0 0 20 19"><circle cx="7.5" cy="7.5" r="6.2" fill="#3a3a3a" stroke="#a8a8a8" stroke-width="2"/><path d="M4 7.5 H11" stroke="#a8a8a8" stroke-width="2"/><path d="M12 12 L18 18" stroke="#a8a8a8" stroke-width="2.8"/></svg>
<div class="a" style="left:1148px;top:501px;width:72px;height:5px;border-radius:3px;background:#555;box-shadow:inset 0 1px 0 #2a2a2a"></div>
<svg class="a" style="left:1231px;top:495px" width="20" height="19" viewBox="0 0 20 19"><circle cx="7.5" cy="7.5" r="6.2" fill="#3a3a3a" stroke="#a8a8a8" stroke-width="2"/><path d="M4 7.5 H11 M7.5 4 V11" stroke="#a8a8a8" stroke-width="2"/><path d="M12 12 L18 18" stroke="#a8a8a8" stroke-width="2.8"/></svg>
<svg class="a" style="left:1266px;top:497px" width="17" height="15" viewBox="0 0 17 15"><rect x="1" y="1" width="15" height="13" rx="3" fill="none" stroke="#a8a8a8" stroke-width="1.8"/><path d="M4 7.5 H13 M4 7.5 L6 5.5 M4 7.5 L6 9.5 M13 7.5 L11 5.5 M13 7.5 L11 9.5" stroke="#a8a8a8" stroke-width="1.2" fill="none"/></svg>
<svg class="a" style="left:1300px;top:495px" width="18" height="18" viewBox="0 0 18 18"><defs><linearGradient id="cg" x1="0" y1="0" x2="0" y2="1"><stop offset="0" stop-color="#9a9a9a"/><stop offset="1" stop-color="#6a6a6a"/></linearGradient></defs><circle cx="9" cy="9" r="7.8" fill="url(#cg)"/><path d="M8 3 V10 L13 13" fill="none" stroke="#2a2a2a" stroke-width="1.6"/></svg>
<div class="a" style="left:1324px;top:493px;width:105px;height:21px;border-radius:4px;background:#292929;border:1px solid #1c1c1c;border-bottom-color:#474747"></div>
<svg class="a" style="left:1324px;top:493px" width="105" height="21" viewBox="0 0 105 21"><g fill="none" stroke="#e8e8e8" stroke-width="1.2"><rect x="12.40" y="5.60" width="5.40" height="9.80" rx="0.6"/><rect x="28.60" y="5.60" width="5.40" height="9.80" rx="0.6"/><rect x="36.20" y="5.60" width="5.40" height="9.80" rx="0.6"/><rect x="52.60" y="5.60" width="5.40" height="9.80" rx="0.6"/><rect x="59.80" y="5.60" width="5.40" height="9.80" rx="0.6"/><rect x="73.40" y="7.60" width="4.40" height="7.80" rx="0.6"/><rect x="80.10" y="7.60" width="4.40" height="7.80" rx="0.6"/></g><g fill="#e0e0e0"><rect x="21.6" y="6.8" width="2.4" height="2.4"/><rect x="21.6" y="13.2" width="2.4" height="2.4"/><rect x="45.5" y="6.8" width="2.4" height="2.4"/><rect x="45.5" y="13.2" width="2.4" height="2.4"/><rect x="69.0" y="10.0" width="1.3" height="1.3"/><rect x="69.0" y="14.0" width="1.3" height="1.3"/></g></svg>
<!-- tracks -->
<svg class="a" style="left:50px;top:526px" width="26" height="15" viewBox="0 0 26 15"><path d="M3 1.5 H1 V13.5 H3 M1 7.5 H3" fill="none" stroke="#8a8a8a" stroke-width="1"/><rect x="5" y="0.5" width="20" height="3.5" fill="#8a8a8a"/><rect x="5" y="5.5" width="20" height="3.5" fill="#8a8a8a"/><rect x="5" y="10.5" width="20" height="3.5" fill="#8a8a8a"/></svg>
<div class="a" style="left:46px;top:545px;width:1363px;height:292px;background:#121212;border-left:1px solid #0e0e0e;border-right:1px solid #080808;border-bottom:1px solid #080808"></div>
<div class="a" style="left:47px;top:545px;width:42px;height:10px;background:#3a3a3a"></div>
<div class="a" style="left:90px;top:546px;width:1318px;height:9px;background:#2c2c2c;border-top:1px solid #1a1a1a;border-bottom:1px solid #111"></div>
<div class="a" style="left:47px;top:556px;width:42px;height:279px;background:#373737"></div>
<svg class="a" style="left:50px;top:545px" width="38" height="10" viewBox="0 0 38 10"><path d="M4 1.5 V8.5 M0.5 5 H7.5" stroke="#6a6a6a" stroke-width="2"/><path d="M9 9 L14 1" stroke="#5a5a5a" stroke-width="0.8"/><path d="M16 5 H22" stroke="#5a5a5a" stroke-width="2"/><path d="M28 3 L34 3 L31 7Z" fill="#d8d8d8"/></svg>
<svg class="a" style="left:19px;top:568px" width="23" height="14" viewBox="0 0 23 14"><path d="M2.5 6 V3.5 Q2.5 1 5 1 Q7.5 1 7.5 3.5" fill="none" stroke="#b0b0b0" stroke-width="1.4"/><rect x="4" y="6" width="8" height="7" fill="#b0b0b0"/><path d="M13 2 H16 M13 7 H16 M13 12 H16 M13 2 V12" fill="none" stroke="#a8a8a8" stroke-width="1"/><rect x="17" y="1" width="5" height="3" fill="#a8a8a8"/><rect x="17" y="5.5" width="5" height="3" fill="#a8a8a8"/><rect x="17" y="10" width="5" height="3" fill="#a8a8a8"/></svg>
<svg class="a" style="left:24px;top:597px" width="11" height="7" viewBox="0 0 11 7"><path d="M0 0 H11 L5.5 6.5Z" fill="#c8c8c8"/></svg>
<div class="a" style="left:124px;top:606px;width:80px;text-align:center;font-size:12px;line-height:13px;color:#d0d0d0">将视频<br>素材拖到<br>此处</div>
<svg class="a" style="left:1420px;top:558px" width="9" height="8" viewBox="0 0 9 8"><path d="M0 7.5 H9 L4.5 0Z" fill="#8a8a8a"/></svg>
<svg class="a" style="left:1420px;top:825px" width="9" height="8" viewBox="0 0 9 8"><path d="M0 0 H9 L4.5 7.5Z" fill="#8a8a8a"/></svg>
<div class="a" style="left:0;top:858px;width:1440px;height:1px;background:#5e5e5e"></div>
</body></html>
